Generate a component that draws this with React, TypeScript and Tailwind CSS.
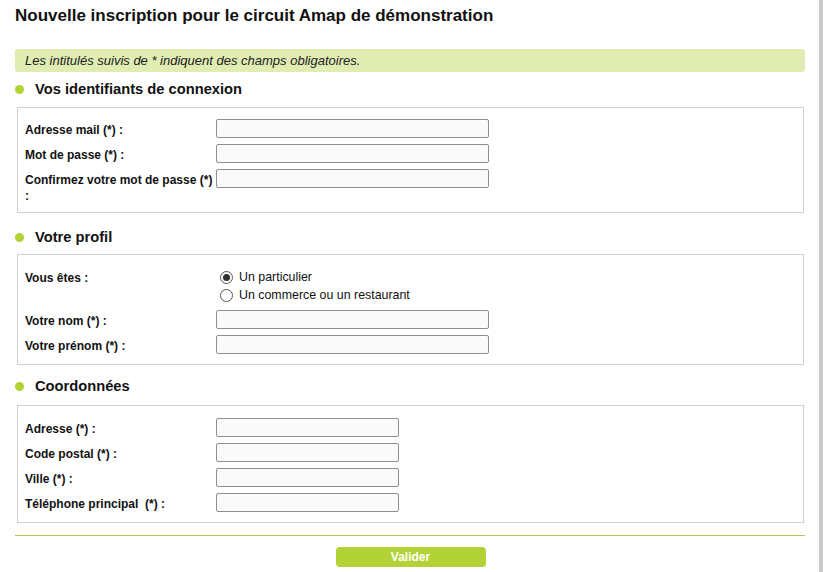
import React from "react";

const font = { fontFamily: '"Liberation Sans", Arial, sans-serif' };

function Field({ label, width = "w-[273px]" }: { label: string; width?: string }) {
  return (
    <div className="flex items-start">
      <label className="w-[191px] pt-[3px] text-[12px] font-bold leading-[16px] text-[#111]">{label}</label>
      <input
        type="text"
        className={`${width} h-[19px] rounded-[2px] border border-[#8f8f8f] bg-[#fafafa] outline-none`}
      />
    </div>
  );
}

function Heading({ title, className }: { title: string; className: string }) {
  return (
    <div className={`flex h-[18px] items-center ${className}`}>
      <span className="ml-[15px] h-[9px] w-[9px] rounded-full bg-[#b2d235]" />
      <h2 className="ml-[11px] text-[14.7px] font-bold leading-[18px] text-[#111]">{title}</h2>
    </div>
  );
}

function Radio({ checked, label }: { checked?: boolean; label: string }) {
  return (
    <label className="flex h-[18px] items-center gap-[6px] text-[12.4px] text-[#111]">
      <span className="flex h-[13px] w-[13px] items-center justify-center rounded-full border border-[#555] bg-white">
        {checked && <span className="h-[7px] w-[7px] rounded-full bg-[#333]" />}
      </span>
      {label}
    </label>
  );
}

export default function App() {
  return (
    <div className="flex min-h-[572px] w-[823px] bg-white" style={font}>
      <div className="w-[819px]">
        <h1 className="ml-[15px] mt-[6px] text-[17px] font-bold leading-[20px] text-[#111]">
          Nouvelle inscription pour le circuit Amap de démonstration
        </h1>

        <div className="ml-[15px] mt-[23px] flex h-[23px] w-[790px] items-center rounded-[3px] bg-[#e0ecb2] pl-[10px]">
          <p className="text-[13px] italic text-[#222]">Les intitulés suivis de * indiquent des champs obligatoires.</p>
        </div>

        <Heading title="Vos identifiants de connexion" className="mt-[8px]" />
        <div className="ml-[17px] mt-[9px] flex w-[787px] flex-col gap-[6px] border border-[#cfcfcf] pb-[8px] pl-[7px] pt-[11px]">
          <Field label="Adresse mail (*) :" />
          <Field label="Mot de passe (*) :" />
          <Field label="Confirmez votre mot de passe (*) :" />
        </div>

        <Heading title="Votre profil" className="mt-[15px]" />
        <div className="ml-[17px] mt-[8px] flex w-[787px] flex-col gap-[6px] border border-[#cfcfcf] pb-[10px] pl-[7px] pt-[13px]">
          <div className="flex items-start">
            <span className="w-[195px] pt-[2px] text-[12px] font-bold leading-[17px] text-[#111]">Vous êtes :</span>
            <div className="flex flex-col">
              <Radio checked label="Un particulier" />
              <Radio label="Un commerce ou un restaurant" />
            </div>
          </div>
          <Field label="Votre nom (*) :" />
          <Field label="Votre prénom (*) :" />
        </div>

        <Heading title="Coordonnées" className="mt-[12px]" />
        <div className="ml-[17px] mt-[10px] flex w-[787px] flex-col gap-[6px] border border-[#cfcfcf] pb-[10px] pl-[7px] pt-[12px]">
          <Field label="Adresse (*) :" width="w-[183px]" />
          <Field label="Code postal (*) :" width="w-[183px]" />
          <Field label="Ville (*) :" width="w-[183px]" />
          <Field label={"Téléphone principal\u00a0 (*) :"} width="w-[183px]" />
        </div>

        <div className="ml-[15px] mt-[12px] h-px w-[790px] bg-[#adc94f]" />

        <div className="mt-[11px] flex justify-center pl-[2px]">
          <button className="h-[20px] w-[150px] rounded-[4px] bg-[#b2d235] text-[12px] font-bold text-white">
            Valider
          </button>
        </div>
      </div>
      <div className="w-[4px] bg-[#c9c9c9]" />
    </div>
  );
}
